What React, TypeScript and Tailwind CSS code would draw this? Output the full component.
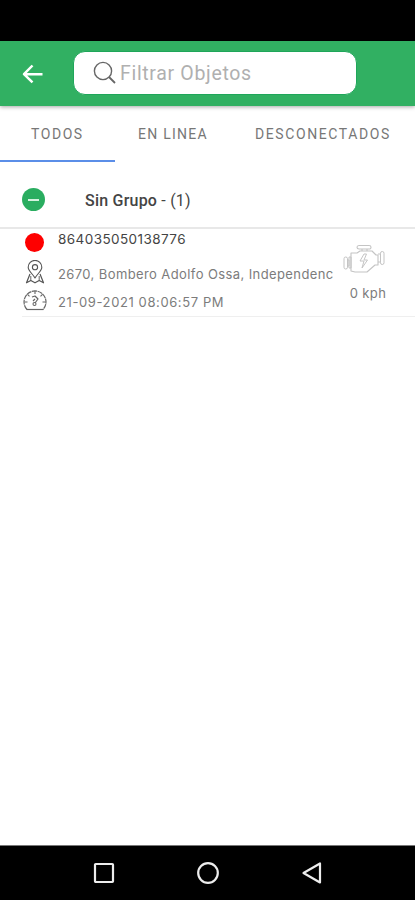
import type { ReactNode } from "react";

function StrokeIcon({ className, viewBox, children }: { className: string; viewBox: string; children: ReactNode }) {
  return (
    <svg className={className} viewBox={viewBox} fill="none" stroke="currentColor" strokeLinejoin="round">
      {children}
    </svg>
  );
}

function Header() {
  return (
    <header className="flex h-[65px] items-start bg-[#31b062] pl-[22px] pt-[10px] shadow-[0_1px_4px_rgba(0,0,0,0.35)]">
      <StrokeIcon className="mt-[13px] h-[20px] w-[22px] shrink-0 text-white" viewBox="0 0 22 20">
        <path d="M10.5 1.5 2 10.2l8.5 8.2M2.2 10.2H20.5" strokeWidth="2.5" />
      </StrokeIcon>
      <div className="ml-[29px] flex h-[44px] w-[284px] items-center rounded-[12px] border border-[#1fa65a] bg-white pl-[19px]">
        <StrokeIcon className="h-[24px] w-[24px] shrink-0 text-[#666]" viewBox="0 0 24 24">
          <circle cx="10" cy="10" r="8.6" strokeWidth="1.4" />
          <path d="m16 16 6 6" strokeWidth="1.8" />
        </StrokeIcon>
        <span className="ml-[3px] whitespace-nowrap pt-px text-[19.5px] leading-[24px] tracking-[0.68px] text-[#b0b0b0]">
          Filtrar Objetos
        </span>
      </div>
    </header>
  );
}

function Tabs() {
  return (
    <nav className="flex h-[56px] whitespace-nowrap text-[14px] leading-[56px] text-[#777]">
      <div className="w-[115px] border-b-[2px] border-[#5b8ee8] pl-[31px] tracking-[1.55px]">TODOS</div>
      <div className="w-[117px] pl-[23px] tracking-[1.25px]">EN LINEA</div>
      <div className="pl-[23px] tracking-[1.6px]">DESCONECTADOS</div>
    </nav>
  );
}

function GroupRow() {
  return (
    <div className="flex h-[67px] items-center border-b-2 border-[#e8e8e8] pl-[22px] pt-[12px]">
      <div className="mb-[2px] flex h-[23px] w-[23px] items-center justify-center rounded-full bg-[#2aad60]">
        <div className="h-[2px] w-[11px] bg-[#d5f2df]" />
      </div>
      <div className="ml-[40px] whitespace-nowrap text-[16px] leading-[20px] tracking-[0.22px] text-[#444]">
        <span className="font-medium">Sin Grupo</span> - (1)
      </div>
    </div>
  );
}

function LocationIcon() {
  return (
    <StrokeIcon className="h-[24px] w-[20px] text-[#555]" viewBox="0 0 20 24">
      <path d="M10 18C7.8 14 3.2 11 3.2 7.2a6.8 6.8 0 0 1 13.6 0C16.8 11 12.2 14 10 18Z" strokeWidth="1.1" />
      <circle cx="10" cy="7.2" r="2.6" strokeWidth="1.1" />
      <path d="M5 14 1.5 22.8l4.3-2.3 4.2 2.3 4.2-2.3 4.3 2.3L15 14" strokeWidth="1.2" />
      <path d="M5.8 16v4.500m8.4-4.5v4.500" strokeWidth="0.9" />
    </StrokeIcon>
  );
}

function GaugeIcon() {
  return (
    <StrokeIcon className="h-[21px] w-[24px] text-[#666]" viewBox="0 0 24 21">
      <path d="M4 19.500a11 11 0 1 1 16 0" strokeWidth="1.2" strokeDasharray="5 .6" />
      <path d="M3.500 19.500h17" strokeWidth="1.2" />
      <path d="M12 1v3M4.5 4.3l2 2M19.5 4.3l-2 2M1.5 12h3m15 0h3" strokeWidth="1.1" />
      <path d="m9 7 3-1 3 3-3 4M12 9l-2 2" strokeWidth="1.2" />
      <circle cx="11.5" cy="14" r="1.5" strokeWidth="1.1" />
    </StrokeIcon>
  );
}

function EngineIcon() {
  return (
    <StrokeIcon className="h-[31px] w-[42px] text-[#c4c4c4]" viewBox="0 0 42 31">
      <path d="M8 9h6l3-2h12l4 4h2v10h-3l-8 7H12l-4-1Z" strokeWidth="1.1" />
      <path d="M16 1.5h10q2 0 2 1.8T26 5H16q-2 0-2-1.7t2-1.8ZM19 5v2m5-2v2" strokeWidth="1.1" />
      <rect x="1" y="13" width="3.5" height="12" rx="1.7" />
      <path d="M4.5 16H6v6H4.5M6 13h2v11H6Z" />
      <rect x="37.5" y="7.5" width="3.5" height="13" rx="1.7" />
      <path d="M35 10h2.5m-2.5 8h2.5" />
      <path d="m21 10-4 7h4l-2 7 5.5-8H21l2.5-6Z" />
    </StrokeIcon>
  );
}

function DeviceRow() {
  return (
    <div className="flex h-[88px] pl-[22px] font-['Inter',sans-serif]">
      <div className="flex w-[393px] border-b border-[#efefef]">
        <div className="flex w-[25px] flex-col items-center pt-[4px]">
          <div className="h-[19px] w-[19px] rounded-full bg-[#fe0000]" />
          <div className="mt-[8px]"><LocationIcon /></div>
          <div className="mt-[6px]"><GaugeIcon /></div>
        </div>
        <div className="ml-[11px] w-[274px] whitespace-nowrap text-[13px] text-[#7c7c7c]">
          <div className="h-[20px] text-[13.5px] leading-[20px] tracking-[0.42px] text-[#444]">864035050138776</div>
          <div className="mt-[15px] h-[20px] leading-[20px] tracking-[0.4px]">2670, Bombero Adolfo Ossa, Independenc</div>
          <div className="mt-[8px] h-[20px] leading-[20px] tracking-[0.6px]">21-09-2021 08:06:57 PM</div>
        </div>
        <div className="flex w-[64px] flex-col items-center pt-[15px] text-[13px] leading-[20px] text-[#7c7c7c]">
          <EngineIcon />
          <span className="ml-[8px] mt-[8px] tracking-[0.4px]">0 kph</span>
        </div>
      </div>
    </div>
  );
}

function NavigationBar() {
  return (
    <footer className="flex h-[55px] items-center border-t border-[#777] bg-black pl-[93px] text-[#ededed]">
      <StrokeIcon className="h-[22px] w-[22px]" viewBox="0 0 22 22">
        <rect x="2" y="2" width="18" height="18" rx="0.7" strokeWidth="2.2" />
      </StrokeIcon>
      <StrokeIcon className="ml-[81px] h-[24px] w-[24px]" viewBox="0 0 24 24">
        <circle cx="12" cy="12" r="9.8" strokeWidth="2.2" />
      </StrokeIcon>
      <StrokeIcon className="ml-[81px] h-[24px] w-[22px]" viewBox="0 0 22 24">
        <path d="M19 2.5v19L2.5 12Z" strokeWidth="2.2" />
      </StrokeIcon>
    </footer>
  );
}

export default function App() {
  return (
    <div className="flex h-[900px] w-[415px] flex-col overflow-hidden bg-white font-['Roboto',sans-serif]">
      <div className="h-[41px] shrink-0 bg-black" />
      <Header />
      <Tabs />
      <GroupRow />
      <DeviceRow />
      <main className="grow" />
      <NavigationBar />
    </div>
  );
}
